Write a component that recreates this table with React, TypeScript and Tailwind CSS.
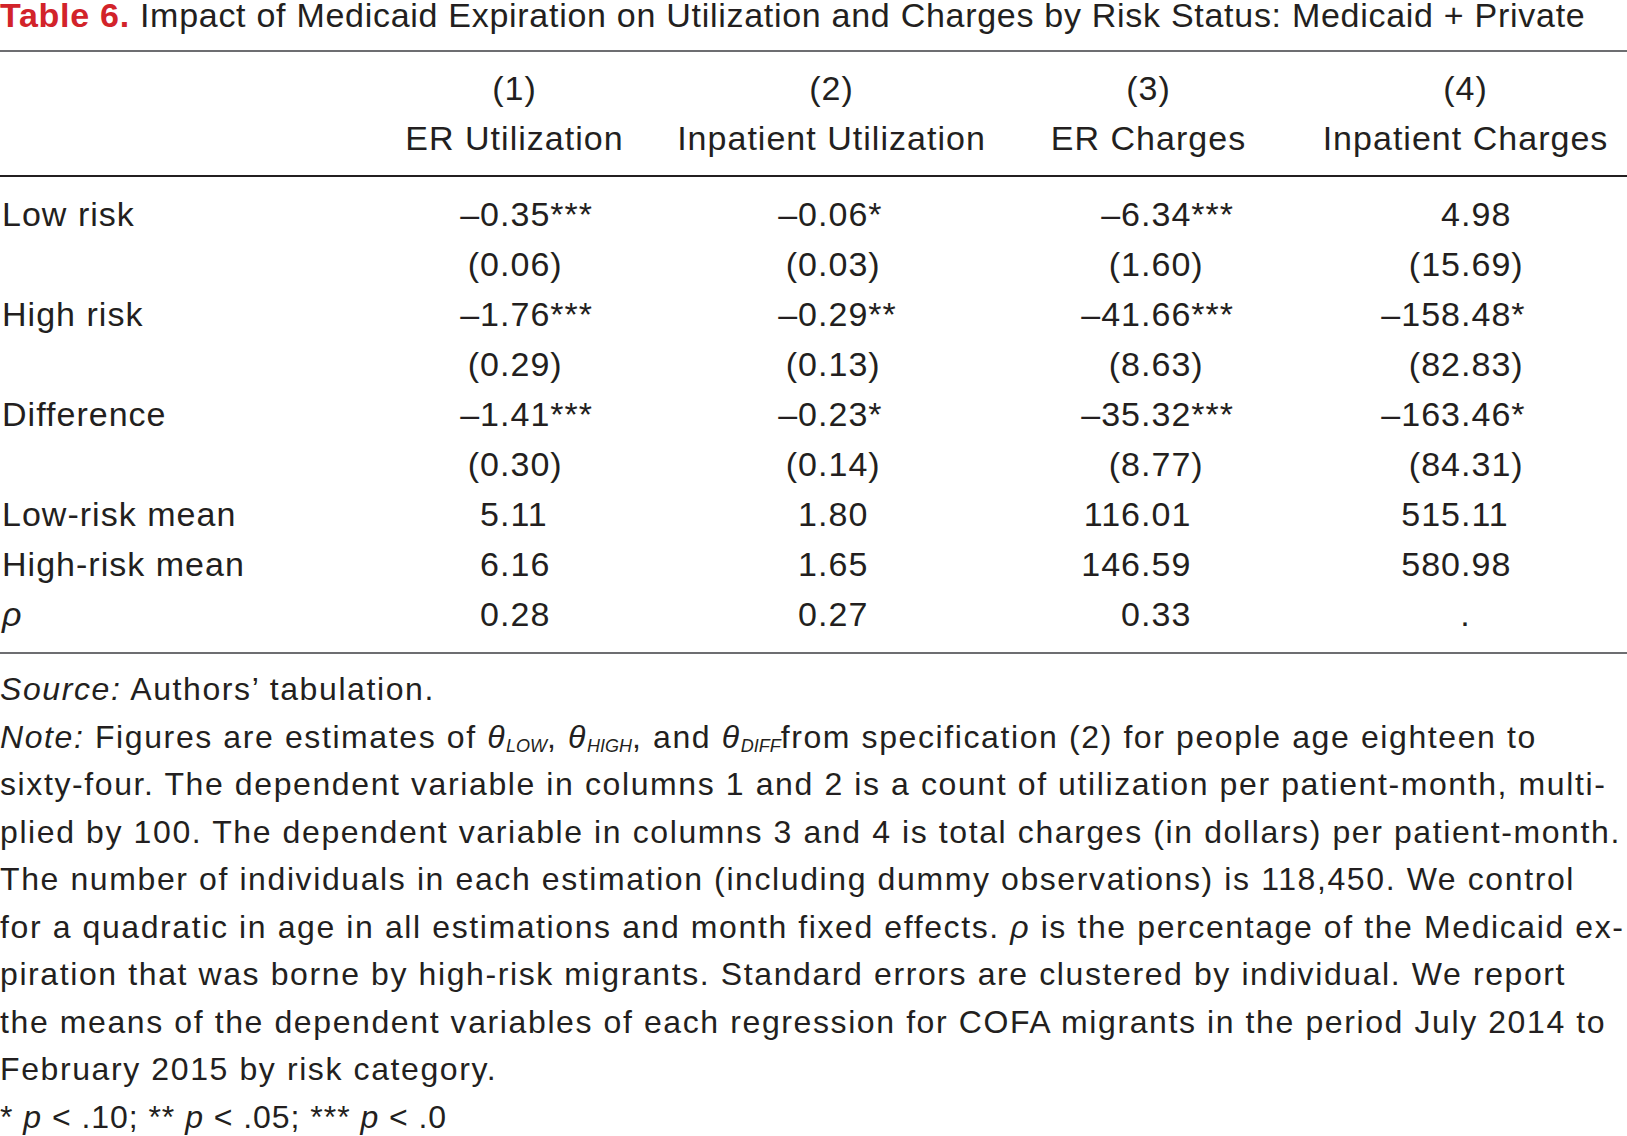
const cols = ['ER Utilization', 'Inpatient Utilization', 'ER Charges', 'Inpatient Charges']
const decimalAt = [144, 145, 151, 154]

type Row = { label: React.ReactNode; values: string[] }

const rows: Row[] = [
  { label: 'Low risk', values: ['–0.35***', '–0.06*', '–6.34***', '4.98'] },
  { label: '', values: ['(0.06)', '(0.03)', '(1.60)', '(15.69)'] },
  { label: 'High risk', values: ['–1.76***', '–0.29**', '–41.66***', '–158.48*'] },
  { label: '', values: ['(0.29)', '(0.13)', '(8.63)', '(82.83)'] },
  { label: 'Difference', values: ['–1.41***', '–0.23*', '–35.32***', '–163.46*'] },
  { label: '', values: ['(0.30)', '(0.14)', '(8.77)', '(84.31)'] },
  { label: 'Low-risk mean', values: ['5.11', '1.80', '116.01', '515.11'] },
  { label: 'High-risk mean', values: ['6.16', '1.65', '146.59', '580.98'] },
  { label: <span className="italic">ρ</span>, values: ['0.28', '0.27', '0.33', '.'] },
]

function Num({ v, col }: { v: string; col: number }) {
  if (v === '.') {
    return <div className="flex h-[50px] items-center justify-center">.</div>
  }
  const i = v.indexOf('.')
  return (
    <div className="flex h-[50px] items-center">
      <span className="text-right" style={{ width: decimalAt[col] }}>
        {v.slice(0, i)}
      </span>
      <span>{v.slice(i)}</span>
    </div>
  )
}

function Theta({ sub }: { sub: string }) {
  return (
    <span className="italic">
      θ<sub className="text-[18px] tracking-normal italic">{sub}</sub>
    </span>
  )
}

export default function App() {
  return (
    <div className="h-[1136px] w-[1627px] overflow-hidden bg-white font-['Liberation_Sans',Arial,sans-serif] text-[#231f20]">
      <div className="whitespace-nowrap pt-[1px] text-[34px] leading-[28px] tracking-[0.021em]">
        <span className="font-bold text-[#d2232a]">Table 6.</span> Impact of Medicaid Expiration on Utilization and
        Charges by Risk Status: Medicaid + Private
      </div>

      <div className="mt-[21px] h-[2px] bg-[#6d6e71]" />

      <div className="text-[34px] tracking-[0.03em]">
        <div className="grid grid-cols-[356px_repeat(4,317px)] pt-[11px] pb-[12px]">
          <div />
          {cols.map((c, i) => (
            <div key={c} className="flex flex-col items-center">
              <div className="flex h-[50px] items-center">({i + 1})</div>
              <div className="flex h-[50px] items-center whitespace-nowrap">{c}</div>
            </div>
          ))}
        </div>

        <div className="h-[2px] bg-[#231f20]" />

        <div className="pt-[12px] pb-[13px]">
          {rows.map((r, ri) => (
            <div key={ri} className="grid grid-cols-[356px_repeat(4,317px)]">
              <div className="flex h-[50px] items-center pl-[2px] whitespace-nowrap">{r.label}</div>
              {r.values.map((v, ci) => (
                <Num key={ci} v={v} col={ci} />
              ))}
            </div>
          ))}
        </div>
      </div>

      <div className="h-[2px] bg-[#6d6e71]" />

      <div className="mt-[12px] whitespace-nowrap text-[32px] leading-[47.5px] tracking-[0.05em]">
        <div>
          <span className="italic">Source:</span> Authors’ tabulation.
        </div>
        <div>
          <span className="italic">Note:</span> Figures are estimates of <Theta sub="LOW" />, <Theta sub="HIGH" />, and{' '}
          <Theta sub="DIFF" />from specification (2) for people age eighteen to
        </div>
        <div>
          sixty-four. The dependent variable in columns 1 and 2 is a count of utilization per patient-month, multi-
        </div>
        <div>
          plied by 100. The dependent variable in columns 3 and 4 is total charges (in dollars) per patient-month.
        </div>
        <div>The number of individuals in each estimation (including dummy observations) is 118,450. We control</div>
        <div>
          for a quadratic in age in all estimations and month fixed effects. <span className="italic">ρ</span> is the
          percentage of the Medicaid ex-
        </div>
        <div>piration that was borne by high-risk migrants. Standard errors are clustered by individual. We report</div>
        <div>the means of the dependent variables of each regression for COFA migrants in the period July 2014 to</div>
        <div>February 2015 by risk category.</div>
        <div className="tracking-[0.03em]">
          * <span className="italic">p</span> &lt; .10; ** <span className="italic">p</span> &lt; .05; ***{' '}
          <span className="italic">p</span> &lt; .0
        </div>
      </div>
    </div>
  )
}
